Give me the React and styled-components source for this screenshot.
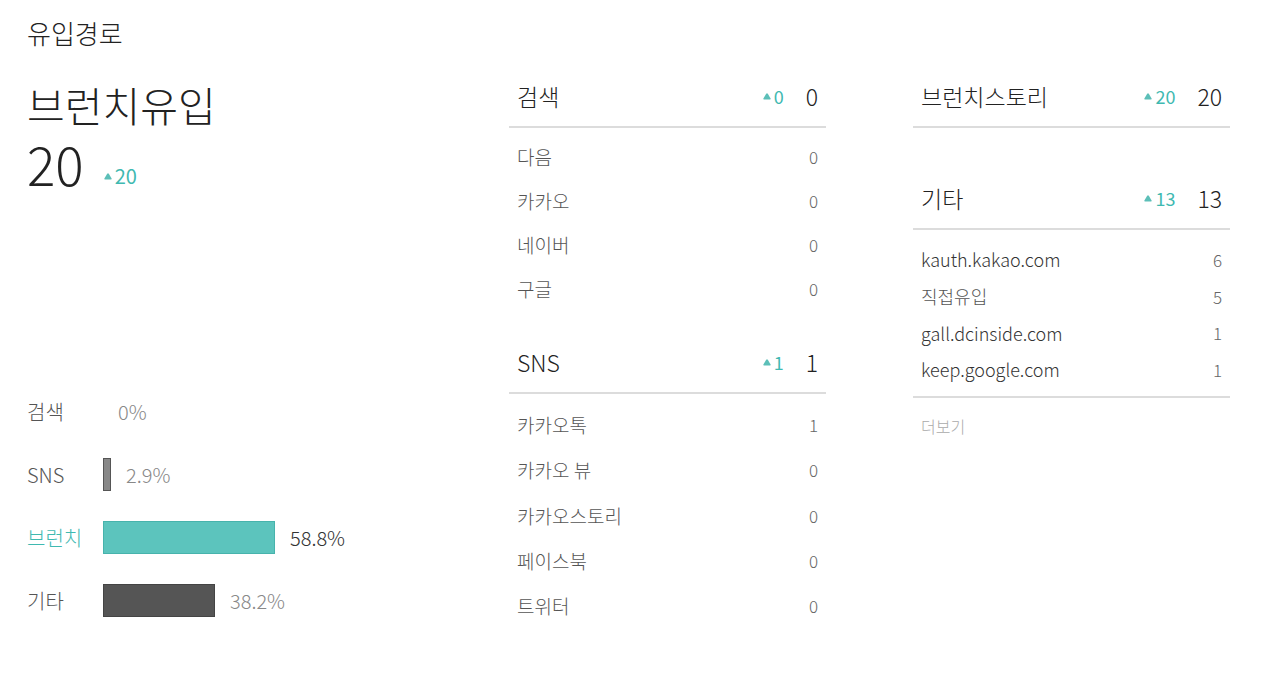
import React from "react";
import styled, { createGlobalStyle } from "styled-components";

const Global = createGlobalStyle`
  html, body { margin: 0; padding: 0; background: #fff; }
  body {
    font-family: "Noto Sans CJK KR", "Noto Sans", sans-serif;
    font-weight: 300;
    color: #222;
  }
`;

const TEAL = "#3fb9b1";

const Page = styled.div`
  width: 1280px;
  height: 678px;
  box-sizing: border-box;
  padding: 16px 50px 0 27px;
  overflow: hidden;
`;

const Title = styled.h1`
  margin: 0;
  font-size: 26px;
  font-weight: 300;
  line-height: 34px;
  color: #222;
`;

const Grid = styled.div`
  margin-top: 16px;
  display: grid;
  grid-template-columns: 395px 317px 317px;
  column-gap: 87px;
`;

const LeftCol = styled.div`
  display: flex;
  flex-direction: column;
`;

const BigName = styled.div`
  margin-top: 13px;
  font-size: 41px;
  line-height: 50px;
  font-weight: 300;
  color: #222;
`;

const BigNumRow = styled.div`
  display: flex;
  align-items: flex-end;
  margin-top: 5px;
  gap: 20px;
`;

const BigNum = styled.div`
  font-size: 53px;
  line-height: 58px;
  font-weight: 300;
  color: #222;
`;

const DeltaWrap = styled.span`
  display: inline-flex;
  align-items: center;
  gap: 3px;
  color: ${TEAL};
  font-size: ${(p) => p.$size || 17}px;
  line-height: 1;
  font-weight: 400;
  margin-bottom: ${(p) => p.$lift || 0}px;
`;

const Tri = styled.svg`
  width: 8px;
  height: 7px;
  flex: none;
`;

const Delta = ({ value, size, lift }) => (
  <DeltaWrap $size={size} $lift={lift}>
    <Tri viewBox="0 0 8 7">
      <path d="M3.2 0.8 Q4 -0.2 4.8 0.8 L7.6 5.6 Q8 6.5 7 6.5 L1 6.5 Q0 6.5 0.4 5.6 Z" fill="#5cbfb8" />
    </Tri>
    {value}
  </DeltaWrap>
);

const Chart = styled.div`
  margin-top: 188px;
  display: flex;
  flex-direction: column;
`;

const ChartRow = styled.div`
  display: flex;
  align-items: center;
  height: 63px;
`;

const ChartLabel = styled.div`
  width: 76px;
  flex: none;
  font-size: 20px;
  color: ${(p) => (p.$active ? TEAL : "#555")};
`;

const Bar = styled.div`
  height: 33px;
  box-sizing: border-box;
  background: ${(p) => p.$fill};
  border: ${(p) => (p.$w > 0 ? `1px solid ${p.$border}` : "none")};
  flex: none;
`;

const Pct = styled.div`
  margin-left: 15px;
  font-size: 20px;
  color: ${(p) => (p.$dark ? "#333" : "#888")};
`;

const Col = styled.div`
  display: flex;
  flex-direction: column;
`;

const Section = styled.div`
  display: flex;
  flex-direction: column;
  margin-top: ${(p) => p.$gap || 0}px;
`;

const Header = styled.div`
  display: flex;
  align-items: center;
  height: 62px;
  box-sizing: border-box;
  padding: 0 8px;
  border-bottom: 2px solid #dcdcdc;
`;

const HeaderName = styled.div`
  flex: 1;
  font-size: 23px;
  font-weight: 300;
  color: #222;
`;

const HeaderValue = styled.div`
  font-size: 23px;
  font-weight: 300;
  color: #222;
  margin-left: 22px;
  text-align: right;
`;

const List = styled.div`
  display: flex;
  flex-direction: column;
  padding: ${(p) => p.$pt || 0}px 0 ${(p) => p.$pb || 0}px;
  border-bottom: ${(p) => (p.$line ? "2px solid #dcdcdc" : "none")};
`;

const Item = styled.div`
  display: flex;
  align-items: center;
  justify-content: space-between;
  height: ${(p) => p.$h}px;
  padding: 0 8px;
  font-size: ${(p) => p.$fs || 19}px;
  color: ${(p) => p.$color || "#555"};
`;

const ItemValue = styled.span`
  color: #666;
  font-size: 17px;
`;

const More = styled.div`
  padding: 16px 8px 0;
  font-size: 16px;
  color: #aaa;
`;

const chart = [
  { label: "검색", pct: 0, text: "0%", fill: "#888", border: "#555" },
  { label: "SNS", pct: 2.9, text: "2.9%", fill: "#888", border: "#555" },
  { label: "브런치", pct: 58.8, text: "58.8%", fill: "#5cc4bd", border: "#47b3ac", active: true, dark: true },
  { label: "기타", pct: 38.2, text: "38.2%", fill: "#555", border: "#444" },
];

const search = [["다음", 0], ["카카오", 0], ["네이버", 0], ["구글", 0]];
const sns = [["카카오톡", 1], ["카카오 뷰", 0], ["카카오스토리", 0], ["페이스북", 0], ["트위터", 0]];
const etc = [["kauth.kakao.com", 6], ["직접유입", 5], ["gall.dcinside.com", 1], ["keep.google.com", 1]];

const SectionHeader = ({ name, delta, value }) => (
  <Header>
    <HeaderName>{name}</HeaderName>
    <Delta value={delta} size={18} />
    <HeaderValue>{value}</HeaderValue>
  </Header>
);

export default function App() {
  return (
    <>
      <Global />
      <Page>
        <Title>유입경로</Title>
        <Grid>
          <LeftCol>
            <BigName>브런치유입</BigName>
            <BigNumRow>
              <BigNum>20</BigNum>
              <Delta value="20" size={20} lift={6} />
            </BigNumRow>
            <Chart>
              {chart.map((c) => {
                const w = Math.round((c.pct / 100) * 293);
                return (
                  <ChartRow key={c.label}>
                    <ChartLabel $active={c.active}>{c.label}</ChartLabel>
                    <Bar $fill={c.fill} $border={c.border} $w={w} style={{ width: w }} />
                    <Pct $dark={c.dark}>{c.text}</Pct>
                  </ChartRow>
                );
              })}
            </Chart>
          </LeftCol>
          <Col>
            <Section>
              <SectionHeader name="검색" delta="0" value="0" />
              <List $pt={6}>
                {search.map(([n, v]) => (
                  <Item key={n} $h={44}>
                    {n}
                    <ItemValue>{v}</ItemValue>
                  </Item>
                ))}
              </List>
            </Section>
            <Section $gap={22}>
              <SectionHeader name="SNS" delta="1" value="1" />
              <List $pt={8}>
                {sns.map(([n, v]) => (
                  <Item key={n} $h={45.3}>
                    {n}
                    <ItemValue>{v}</ItemValue>
                  </Item>
                ))}
              </List>
            </Section>
          </Col>
          <Col>
            <Section>
              <SectionHeader name="브런치스토리" delta="20" value="20" />
            </Section>
            <Section $gap={40}>
              <SectionHeader name="기타" delta="13" value="13" />
              <List $pt={11} $pb={8} $line>
                {etc.map(([n, v]) => (
                  <Item key={n} $h={36.7} $fs={18} $color={/^[a-z]/.test(n) ? "#333" : "#555"}>
                    {n}
                    <ItemValue>{v}</ItemValue>
                  </Item>
                ))}
              </List>
              <More>더보기</More>
            </Section>
          </Col>
        </Grid>
      </Page>
    </>
  );
}
